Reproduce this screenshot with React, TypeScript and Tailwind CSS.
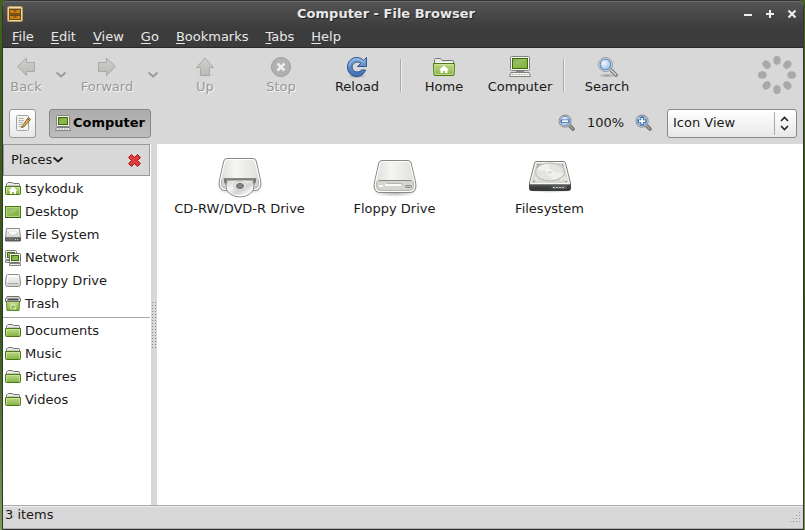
import React, { useState } from "react";

type IconProps = { className?: string };

const outline = "#8b8e88";

function Defs() {
  return (
    <svg width="0" height="0" className="absolute" aria-hidden="true">
      <defs>
        <linearGradient id="leaf" x1="0" y1="0" x2="0" y2="1">
          <stop offset="0" stopColor="#bfdb88" />
          <stop offset="1" stopColor="#86b244" />
        </linearGradient>
        <linearGradient id="screen" x1="0" y1="0" x2="1" y2="1">
          <stop offset="0" stopColor="#6f9f35" />
          <stop offset="0.5" stopColor="#8fbb52" />
          <stop offset="1" stopColor="#7fae3c" />
        </linearGradient>
        <linearGradient id="metal" x1="0" y1="0" x2="1" y2="0">
          <stop offset="0" stopColor="#dcdcd8" />
          <stop offset="0.4" stopColor="#f5f5f3" />
          <stop offset="1" stopColor="#dededb" />
        </linearGradient>
        <linearGradient id="metalDown" x1="0" y1="0" x2="0" y2="1">
          <stop offset="0" stopColor="#fbfbfa" />
          <stop offset="1" stopColor="#d5d6d2" />
        </linearGradient>
        <linearGradient id="disc" x1="0" y1="0" x2="1" y2="1">
          <stop offset="0" stopColor="#d0d0d0" />
          <stop offset="0.35" stopColor="#f4f4f4" />
          <stop offset="0.55" stopColor="#d2d2d2" />
          <stop offset="0.8" stopColor="#f8f8f8" />
          <stop offset="1" stopColor="#c8c8c8" />
        </linearGradient>
        <linearGradient id="blue" x1="0" y1="0" x2="0" y2="1">
          <stop offset="0" stopColor="#86addd" />
          <stop offset="1" stopColor="#3a6cae" />
        </linearGradient>
        <radialGradient id="lens" cx="0.35" cy="0.35" r="0.8">
          <stop offset="0" stopColor="#f4f8fd" />
          <stop offset="1" stopColor="#8db4e4" />
        </radialGradient>
        <radialGradient id="shade">
          <stop offset="0" stopColor="#000" stopOpacity="0.3" />
          <stop offset="1" stopColor="#000" stopOpacity="0" />
        </radialGradient>
        <linearGradient id="faded" x1="0" y1="0" x2="0" y2="1">
          <stop offset="0" stopColor="#cfcfcc" />
          <stop offset="1" stopColor="#b9b9b6" />
        </linearGradient>
        <linearGradient id="graphite" x1="0" y1="0" x2="0" y2="1">
          <stop offset="0" stopColor="#6a6d68" />
          <stop offset="0.5" stopColor="#3f4240" />
          <stop offset="1" stopColor="#343735" />
        </linearGradient>
      </defs>
    </svg>
  );
}

function CabinetIcon() {
  return (
    <svg width="16" height="16" viewBox="0 0 16 16" aria-hidden="true">
      <rect x="0.5" y="0.5" width="15" height="15" rx="1" fill="#6b4a12" stroke="#b99a5c" />
      <path d="M1.500 14.500V1.500H14.500V14.500z" fill="#7a5a22" stroke="#ecd6a2" />
      <path d="M2 2H14" stroke="#f6ebcb" />
      <rect x="2.500" y="3.500" width="11" height="4" fill="#cf8113" stroke="#6f4a10" />
      <rect x="2.500" y="9.500" width="11" height="4" fill="#cf8113" stroke="#6f4a10" />
      <path d="M6.500 5H9.500M6.500 11H9.500" stroke="#5b3905" />
    </svg>
  );
}

function ArrowIcon({ className = "" }: IconProps) {
  return (
    <svg width="24" height="24" viewBox="0 0 24 24" className={className} aria-hidden="true">
      <path d="M3.500 11.500L12.500 3V7.500H20.500V16.500H12.500V20.500z" fill="url(#faded)" stroke="#a9a9a7" />
    </svg>
  );
}

function UpIcon() {
  return (
    <svg width="24" height="24" viewBox="0 0 24 24" aria-hidden="true">
      <ellipse cx="12" cy="20" rx="9" ry="2" fill="url(#shade)" opacity="0.4" />
      <path d="M12 3L20.500 12.500H16.500V20.500H7.500V12.500H3.500z" fill="url(#faded)" stroke="#a9a9a7" />
    </svg>
  );
}

function StopIcon() {
  return (
    <svg width="24" height="24" viewBox="0 0 24 24" aria-hidden="true">
      <circle cx="12" cy="12" r="9.500" fill="#b1b1af" stroke="#9d9d9b" />
      <path d="M8.500 8.500L15.500 15.500M15.500 8.500L8.500 15.500" stroke="#ededed" strokeWidth="2.600" />
    </svg>
  );
}

function ReloadIcon() {
  return (
    <svg width="24" height="24" viewBox="0 0 24 24" aria-hidden="true">
      <ellipse cx="12" cy="21" rx="10" ry="2.500" fill="url(#shade)" />
      <path
        d="M21.500 2.500V11.500H12.500L15.700 8.300C13.800 6.500 10.600 6.500 8.600 8.500C6.600 10.500 6.600 13.700 8.600 15.500C10.700 17.500 14.600 17.300 16.500 15H20.600C19.200 19 15.600 21.500 11.600 21.500C6.200 21.500 2.500 17.200 2.500 12C2.500 6.800 6.500 2.500 11.800 2.500C14.400 2.500 16.700 3.500 18.500 5.400z"
        fill="url(#blue)" stroke="#2a5590"
      />
      <path d="M4 11C4.500 6.800 8 3.900 12 4C14.500 4 16.500 5 18.300 6.800L20.300 4.900" fill="none" stroke="#a9c6ea" strokeWidth="0.900" />
    </svg>
  );
}

function Folder({ size, house = false }: { size: number; house?: boolean }) {
  return (
    <svg width={size} height={size} viewBox={size === 24 ? "0 0 24 24" : "0 0 16 16"} aria-hidden="true">
      {size === 24 ? (
        <>
          <path d="M2.500 9V4.500Q2.500 3.500 3.500 3.500H8.500L10 5.500H20.500Q21.500 5.500 21.500 6.500V9" fill="#e6e7e4" stroke="#777a75" />
          <path d="M4 7.500H20" stroke="#fff" />
          <path d="M1.500 8.500H22.500L22 19.500Q22 20.500 21 20.500H3Q2 20.500 2 19.500z" fill="url(#leaf)" stroke="#4b7a13" strokeLinejoin="round" />
          <path d="M2.700 9.500H21.400L21 19.500H3z" fill="none" stroke="#d3e8a8" strokeOpacity="0.700" />
        </>
      ) : (
        <>
          <path d="M1.500 6V3L3 1.500H7L8.500 2.500H14L14.500 3.500V6" fill="#ececea" stroke="#737671" />
          <path d="M3 4.500H13" stroke="#c5c7c2" />
          <path d="M0.500 5.500H15.500V12.500Q15.500 13.500 14.500 13.500H1.500Q.5 13.500 .5 12.500z" fill="url(#leaf)" stroke="#4b7a13" />
          <path d="M1.500 12.500V6.500H14.500V12.500" fill="none" stroke="#d3e8a8" strokeOpacity="0.700" />
        </>
      )}
      {house && (
        <path
          d={size === 24 ? "M12 10.500L17 15H15.500V18H13V16H11V18H8.500V15H7z" : "M8 5.500L12.500 10H11V13H9V11H7V13H5V10H3.500z"}
          fill="#fff"
        />
      )}
    </svg>
  );
}

function ComputerIcon({ size }: { size: number }) {
  return size === 24 ? (
    <svg width="24" height="24" viewBox="0 0 24 24" aria-hidden="true">
      <rect x="2.500" y="1.500" width="19" height="14" rx="1" fill="#f4f4f2" stroke="#81847e" />
      <rect x="4.500" y="3.500" width="15" height="10" fill="url(#screen)" stroke="#3f6b0c" />
      <path d="M5 4H19L5 11z" fill="#fff" opacity="0.150" />
      <path d="M8 16H16V17.500H8z" fill="#858882" />
      <path d="M3 17.500H21L22.500 21.500H1.500z" fill="#f4f4f2" stroke="#81847e" strokeLinejoin="round" />
      <path d="M4 19.500H20" stroke="#b7bab4" strokeDasharray="2 1" />
    </svg>
  ) : (
    <svg width="16" height="16" viewBox="0 0 16 16" aria-hidden="true">
      <rect x="1.500" y="0.500" width="13" height="11" rx="1" fill="#f4f4f2" stroke="#81847e" />
      <rect x="3.500" y="2.500" width="9" height="7" fill="url(#screen)" stroke="#3f6b0c" />
      <path d="M1.500 12.500H14.500L15.500 15.500H.5z" fill="#eeeeec" stroke="#81847e" />
      <path d="M3 14H13" stroke="#a7aaa4" strokeDasharray="2 1" />
    </svg>
  );
}

function Magnifier({ size, sign }: { size: number; sign?: "plus" | "minus" }) {
  return (
    <svg width={size} height={size} viewBox={sign ? "0 0 24 24" : "-1 0 24 24"} aria-hidden="true">
      {!sign && <ellipse cx="11" cy="20.500" rx="9" ry="2" fill="url(#shade)" />}
      <path d="M14.500 14.500L20 20" stroke="#6d706b" strokeWidth={sign ? 5 : 3.600} strokeLinecap="round" />
      <path d="M15 15L19.800 19.800" stroke={sign ? "#a9aba6" : "#dcddda"} strokeWidth="1.600" strokeLinecap="round" />
      <circle cx="9.500" cy="9.500" r={sign ? 8 : 7} fill="#f1f1ef" stroke="#92958f" strokeWidth={sign ? 1.400 : 1} />
      <circle cx="9.500" cy="9.500" r={sign ? 6.300 : 5.400} fill="url(#lens)" stroke="#5b8bc8" strokeWidth="1.200" />
      {sign && (
        <>
          <path d={sign === "minus" ? "M4 9.500H15" : "M4 9.500H15M9.500 4V15"} stroke="#3465a4" strokeWidth="4.600" />
          <path d={sign === "minus" ? "M5.200 9.500H13.800" : "M5.200 9.500H13.800M9.500 5.200V13.800"} stroke="#fff" strokeWidth="2.200" />
        </>
      )}
    </svg>
  );
}

function Throbber() {
  return (
    <svg width="40" height="40" viewBox="0 0 40 40" role="img" aria-label="Idle">
      {[0, 45, 90, 135, 180, 225, 270, 315].map((a) => (
        <ellipse key={a} cx="20" cy="5.300" rx="3.700" ry="4.400" fill="#a9a9a9" transform={`rotate(${a} 20 20)`} />
      ))}
    </svg>
  );
}

function EditIcon() {
  return (
    <svg width="16" height="16" viewBox="0 0 16 16" aria-hidden="true">
      <rect x="1.500" y="0.500" width="12" height="15" rx="1" fill="#f3f3f1" stroke="#a2a59f" />
      <path d="M3.500 3.500H9M3.500 5.500H9M3.500 7.500H8M3.500 9.500H7M3.500 11.500H7" stroke="#b5b7b3" />
      <path d="M7.500 10.500L6.500 12.500L8.800 12L15.500 4.500L13.500 2.500z" fill="#e2a94f" stroke="#6b4a16" strokeWidth="0.800" />
      <path d="M12.500 3.500L14.500 5.500" stroke="#555" />
    </svg>
  );
}

function DesktopIcon() {
  return (
    <svg width="16" height="16" viewBox="0 0 16 16" aria-hidden="true">
      <rect x="0.500" y="2.500" width="15" height="11" fill="url(#screen)" stroke="#4b7a13" />
      <path d="M1.500 12.500V3.500H14.500V12.500z" fill="none" stroke="#b4d680" />
      <path d="M2 4H14Q12 8 2 10z" fill="#fff" opacity="0.180" />
      <path d="M1 13.500H15" stroke="#335a08" />
    </svg>
  );
}

function DiskIcon() {
  return (
    <svg width="16" height="16" viewBox="0 0 16 16" aria-hidden="true">
      <path d="M1.500 1.500H14.500L15.500 10.500H.5z" fill="url(#metalDown)" stroke={outline} />
      <path d="M3 5Q3.500 8.500 8 8.500Q12.500 8.500 13 5" fill="#fafafa" stroke="#c5c7c2" />
      <path d="M0 10.500H16V13.500Q16 14.500 15 14.500H1Q0 14.500 0 13.500z" fill="#5c5e5a" />
      <path d="M1 12H9" stroke="#7e807b" />
      <path d="M10 12.500H14" stroke="#d3d7cf" strokeDasharray="1 1" />
    </svg>
  );
}

function NetworkIcon() {
  return (
    <svg width="16" height="16" viewBox="0 0 16 16" aria-hidden="true">
      <rect x="0.500" y="0.500" width="11" height="9" rx="1" fill="#f1f1ef" stroke="#81847e" />
      <rect x="2.500" y="2.500" width="7" height="5" fill="#8fbb52" stroke="#3f6b0c" />
      <path d="M.5 10.500H5V12.500H.5z" fill="#eee" stroke="#81847e" />
      <rect x="4.500" y="3.500" width="11" height="9" rx="1" fill="#f4f4f2" stroke="#6c6f69" />
      <rect x="6.500" y="5.500" width="7" height="5" fill="url(#screen)" stroke="#3f6b0c" />
      <path d="M4.500 13.500H15.500V15.500H4.500z" fill="#eee" stroke="#81847e" />
    </svg>
  );
}

function SmallFloppyIcon() {
  return (
    <svg width="16" height="16" viewBox="0 0 16 16" aria-hidden="true">
      <path d="M2.500 1.500H13.500Q14.500 1.500 14.700 3L15.500 10V11.500Q15.500 13.500 13.500 13.500H2.500Q.5 13.500 .5 11.500V10L1.300 3Q1.500 1.500 2.500 1.500z" fill="url(#metalDown)" stroke={outline} />
      <path d="M2.500 10.500H13.500" stroke="#aaada7" />
      <path d="M2 11H14V12.500H2z" fill="#cfd1cc" />
      <path d="M2.500 9V3H13" fill="none" stroke="#fff" />
    </svg>
  );
}

function TrashIcon() {
  return (
    <svg width="16" height="16" viewBox="0 0 16 16" aria-hidden="true">
      <path d="M1.500 5.500H14.500L14 14.500H2z" fill="url(#leaf)" stroke="#5d8a28" />
      <path d="M2 .5H14L15.500 3V5.500H.5V3z" fill="#d7d8d5" stroke="#6f726c" />
      <path d="M2.500 3.500H13.500" stroke="#4e514c" strokeWidth="2" />
      <path d="M5.500 10.500L7 8H9L10.500 10M11 11L10 13H8M6.500 13L5.500 11.500" fill="none" stroke="#e3f2c8" strokeWidth="1.200" />
    </svg>
  );
}

function DriveBody({ y }: { y: number }) {
  return (
    <g transform={`translate(0 ${y})`}>
      <ellipse cx="24" cy="33" rx="22" ry="4" fill="url(#shade)" />
      <path d="M11 .5H37Q39.500 .5 40.200 3L44.500 22Q45 24 44.900 27Q44.500 32.500 39 32.500H9Q3.500 32.500 3.100 27Q3 24 3.500 22L7.800 3Q8.500 .5 11 .5z" fill="url(#metal)" stroke="#888a85" />
      <path d="M11.500 1.500H36.500Q38.500 1.500 39.200 4L43.400 22V26.500Q43 31.500 38 31.500H10Q5 31.500 4.600 26.500V22L8.800 4Q9.500 1.500 11.500 1.500z" fill="none" stroke="#fff" />
      <path d="M5.500 22.500Q6 20.500 9 20.500H39Q42 20.500 42.500 22.500V26.500Q42 30.500 38 30.500H10Q6 30.500 5.500 26.500z" fill="#d3d6ce" stroke="#b5b8b1" />
      <path d="M8 20.500H40" stroke="#888a85" />
    </g>
  );
}

function OpticalDriveIcon() {
  return (
    <svg width="48" height="48" viewBox="0 0 48 48" aria-hidden="true">
      <DriveBody y={6} />
      <path d="M8 27H40V29.500Q40 32 37 32H11Q8 32 8 29.500z" fill="#777a75" />
      <path d="M11 28H37Q38 31 38 34A14 11 0 0 1 10 34Q10 31 11 28z" fill="url(#disc)" stroke="#888a85" />
      <path d="M11.200 34A12.800 9.800 0 0 0 36.800 34" fill="none" stroke="#fff" />
      <ellipse cx="24" cy="34" rx="6.500" ry="4.500" fill="#e6e6e6" stroke="#c9c9c9" />
      <ellipse cx="24" cy="34" rx="3.600" ry="2.500" fill="#80827e" stroke="#6c6e6a" />
    </svg>
  );
}

function FloppyDriveIcon() {
  return (
    <svg width="48" height="48" viewBox="0 0 48 48" aria-hidden="true">
      <DriveBody y={8} />
      <path d="M8 34H12M14 33H30" stroke="#fafafa" strokeWidth="2" />
      <path d="M16 31.500H31" stroke="#b4b7b0" />
      <rect x="34.500" y="33.500" width="6" height="2" rx="1" fill="#c3c6be" stroke="#888a85" />
    </svg>
  );
}

function HardDiskIcon() {
  return (
    <svg width="48" height="48" viewBox="0 0 48 48" aria-hidden="true">
      <ellipse cx="24" cy="38" rx="23" ry="3" fill="url(#shade)" />
      <path d="M3.500 31H44.500V36.500Q44.500 38.500 42.500 38.500H5.500Q3.500 38.500 3.500 36.500z" fill="url(#graphite)" stroke="#3a3d3b" />
      <path d="M10 9.500H38Q39 9.500 39.300 10.500L44.500 31Q44.500 32.500 43.500 32.500H4.500Q3.500 32.500 3.500 31L8.700 10.500Q9 9.500 10 9.500z" fill="#d7d9d3" stroke="#7f827c" />
      <path d="M10 10.500H38L43.400 31.500H4.600z" fill="none" stroke="#f7f8f5" />
      <ellipse cx="24" cy="20" rx="14.500" ry="9" fill="#e2e4df" stroke="#b9bcb5" />
      <path d="M10.500 18A13.500 7.500 0 0 1 23 12L24 19z" fill="#fff" opacity="0.500" />
      <path d="M25 27.500A13.500 7.500 0 0 0 37.500 21L25 20z" fill="#fff" opacity="0.450" />
      <ellipse cx="24" cy="20.500" rx="3.500" ry="2.500" fill="#dcded8" stroke="#fff" />
      <path d="M11 13L15 12M10 16L13 13M36 13L38 15" stroke="#a9aca5" />
      <path d="M34 28.500L39 25L40 29M9 25L12 29" fill="none" stroke="#f5f6f3" />
      <path d="M7 29.500H9M39 29.500H41M11 12.500H12M36 12.500H37" stroke="#8b8e88" />
      <path d="M25.500 33.500H40.500V37H25.500z" fill="#585b57" />
      <path d="M27 35.500H39" stroke="#c3c7bf" strokeDasharray="2 1" />
    </svg>
  );
}

function Chevron({ color }: { color: string }) {
  return (
    <svg width="12" height="8" viewBox="0 0 12 8" fill="none" aria-hidden="true">
      <path d="M1.500 1.500L6 5.500L10.500 1.500" stroke={color} strokeWidth="1.800" />
    </svg>
  );
}

const menus = ["File", "Edit", "View", "Go", "Bookmarks", "Tabs", "Help"];

function Tool({ label, children, className = "w-[76px]", disabled = false }: { label: string; children: React.ReactNode; className?: string; disabled?: boolean }) {
  return (
    <button
      disabled={disabled}
      className={`flex shrink-0 flex-col items-center ${disabled ? "text-[#999] [text-shadow:1px_1px_0_#f4f4f4]" : ""} ${className}`}
    >
      {children}
      <span className="leading-4">{label}</span>
    </button>
  );
}

function Divider() {
  return <div className="mx-[5px] h-[33px] w-px shrink-0 self-center bg-[#aaa] shadow-[1px_0_0_#eee]" />;
}

const places: [string, React.ReactNode][] = [
  ["tsykoduk", <Folder size={16} house />],
  ["Desktop", <DesktopIcon />],
  ["File System", <DiskIcon />],
  ["Network", <NetworkIcon />],
  ["Floppy Drive", <SmallFloppyIcon />],
  ["Trash", <TrashIcon />],
];

const folders = ["Documents", "Music", "Pictures", "Videos"];

function Place({ label, icon }: { label: string; icon: React.ReactNode }) {
  return (
    <li>
      <button className="flex h-[23px] w-full items-center gap-1 pl-0.5 text-left">
        {icon}
        <span>{label}</span>
      </button>
    </li>
  );
}

const drives: [string, React.ReactNode][] = [
  ["CD-RW/DVD-R Drive", <OpticalDriveIcon />],
  ["Floppy Drive", <FloppyDriveIcon />],
  ["Filesystem", <HardDiskIcon />],
];

export default function App() {
  const [view, setView] = useState("Icon View");
  return (
    <div className="h-screen bg-linear-to-b from-[#43621f] via-[#35551a] via-60% to-[#7f9b5c] pr-px pl-0.5 font-['DejaVu_Sans',sans-serif] text-[13px] text-[#1a1a1a]">
      <Defs />
      <div className="flex h-full flex-col overflow-hidden rounded-t-md border border-[#333] bg-[#d8d8d8]">
        <header className="shrink-0 border-b border-[#2b272b] bg-linear-to-b from-[#555] to-[#3c3c3c] to-60% text-[#e8e8e8] shadow-[inset_0_1px_0_#6e6e6e]">
          <div className="flex h-[25px] items-center pl-1">
            <div className="w-7 shrink-0">
              <CabinetIcon />
            </div>
            <h1 className="flex-1 text-center text-[13px] font-bold [text-shadow:1px_1px_0_#222]">Computer - File Browser</h1>
            <div className="flex shrink-0">
              <button aria-label="Minimize" className="flex w-[22px] justify-center">
                <svg width="10" height="10" viewBox="0 0 10 10"><path d="M1 6H9" stroke="#eee" strokeWidth="2" /></svg>
              </button>
              <button aria-label="Maximize" className="flex w-[22px] justify-center">
                <svg width="10" height="10" viewBox="0 0 10 10"><path d="M1 5H9M5 1V9" stroke="#eee" strokeWidth="2" /></svg>
              </button>
              <button aria-label="Close" className="flex w-[22px] justify-center">
                <svg width="10" height="10" viewBox="0 0 10 10"><path d="M1.500 1.500L8.500 8.500M8.500 1.500L1.500 8.500" stroke="#eee" strokeWidth="2.200" /></svg>
              </button>
            </div>
          </div>
          <nav className="flex h-[21px] items-center gap-px px-px">
            {menus.map((m) => (
              <button key={m} className="px-2">
                <span className="underline underline-offset-2">{m[0]}</span>
                {m.slice(1)}
              </button>
            ))}
          </nav>
        </header>

        <div className="flex h-[54px] shrink-0 items-center" role="toolbar" aria-label="Navigation">
          <Tool label="Back" className="w-[46px]" disabled>
            <ArrowIcon />
          </Tool>
          <button aria-label="Back history" disabled className="flex w-6 justify-center"><Chevron color="#999" /></button>
          <Tool label="Forward" className="w-[68px]" disabled>
            <ArrowIcon className="-scale-x-100" />
          </Tool>
          <button aria-label="Forward history" disabled className="mr-0.5 flex w-6 justify-center"><Chevron color="#999" /></button>
          <Tool label="Up" disabled><UpIcon /></Tool>
          <Tool label="Stop" disabled><StopIcon /></Tool>
          <Tool label="Reload"><ReloadIcon /></Tool>
          <Divider />
          <Tool label="Home"><Folder size={24} house /></Tool>
          <Tool label="Computer"><ComputerIcon size={24} /></Tool>
          <Divider />
          <Tool label="Search"><Magnifier size={24} /></Tool>
          <div className="ml-auto pr-1.5"><Throbber /></div>
        </div>

        <div className="flex h-[42px] shrink-0 items-center px-1.5">
          <button aria-label="Edit location" className="flex h-[29px] w-[27px] items-center justify-center rounded-[3px] border border-[#999] bg-linear-to-b from-white to-[#e8e8e8]">
            <EditIcon />
          </button>
          <button className="ml-[13px] flex h-[29px] items-center gap-0.5 rounded-[3px] border border-[#888] bg-linear-to-b from-[#acacac] to-[#bdbdbd] px-[5px] font-bold text-black">
            <ComputerIcon size={16} />
            Computer
          </button>
          <div className="ml-auto flex items-center">
            <button aria-label="Zoom out"><Magnifier size={18} sign="minus" /></button>
            <span className="w-[59px] text-center">100%</span>
            <button aria-label="Zoom in"><Magnifier size={18} sign="plus" /></button>
            <label className="relative ml-3.5 block h-[29px] w-[130px]">
              <select
                aria-label="View mode"
                value={view}
                onChange={(e) => setView(e.target.value)}
                className="h-full w-full appearance-none rounded-[3px] border border-[#888] bg-linear-to-b from-white to-[#e8e8e8] px-[5px]"
              >
                <option>Icon View</option>
                <option>List View</option>
                <option>Compact View</option>
              </select>
              <svg width="24" height="23" viewBox="0 0 24 23" fill="none" className="pointer-events-none absolute top-[3px] right-0" aria-hidden="true">
                <path d="M1.500 0V23" stroke="#aaa" />
                <path d="M8 9L11.500 5.500L15 9M8 14L11.500 17.500L15 14" stroke="#222" strokeWidth="1.600" />
              </svg>
            </label>
          </div>
        </div>

        <div className="flex min-h-0 flex-1">
          <aside className="flex w-[148px] shrink-0 flex-col bg-white">
            <div className="mr-px mb-px flex h-8 shrink-0 items-center justify-between border border-[#999] bg-[#d8d8d8] pr-2 pl-[7px]">
              <button className="flex items-center">
                Places
                <Chevron color="#222" />
              </button>
              <button aria-label="Close sidebar">
                <svg width="13" height="13" viewBox="0 0 13 13" aria-hidden="true">
                  <path d="M3.500 .5L6.500 3.500L9.500 .5L12.500 3.500L9.500 6.500L12.500 9.500L9.500 12.500L6.500 9.500L3.500 12.500L.5 9.500L3.500 6.500L.5 3.500z" fill="#dd3d3d" stroke="#a91010" />
                </svg>
              </button>
            </div>
            <ul>
              {places.map(([label, icon]) => <Place key={label} label={label} icon={icon} />)}
            </ul>
            <hr className="mt-0.5 mr-px mb-px border-[#aaa]" />
            <ul>
              {folders.map((label) => <Place key={label} label={label} icon={<Folder size={16} />} />)}
            </ul>
          </aside>
          <div className="flex w-1.5 shrink-0 items-center justify-center">
            <div className="h-[47px] w-full bg-[radial-gradient(#888_0.7px,transparent_0.9px)] bg-size-[3px_3px]" />
          </div>
          <main className="flex flex-1 bg-white pt-2 pl-[5px]">
            {drives.map(([label, icon]) => (
              <button key={label} className="flex w-[155px] flex-col items-center self-start">
                {icon}
                <span className="leading-[18px] whitespace-nowrap">{label}</span>
              </button>
            ))}
          </main>
        </div>

        <footer className="flex h-6 shrink-0 items-center justify-between border-t border-b border-t-[#aaa] border-b-[#aaa] pl-0.5 shadow-[inset_0_1px_0_#eee]">
          <span className="pb-1">3 items</span>
          <svg width="16" height="16" viewBox="0 0 16 16" fill="#999" aria-hidden="true">
            {[[12, 3], [9, 6], [12, 6], [6, 9], [9, 9], [12, 9], [3, 12], [6, 12], [9, 12], [12, 12]].map(([x, y]) => (
              <rect key={`${x}-${y}`} x={x} y={y} width="1" height="1" />
            ))}
          </svg>
        </footer>
      </div>
    </div>
  );
}
